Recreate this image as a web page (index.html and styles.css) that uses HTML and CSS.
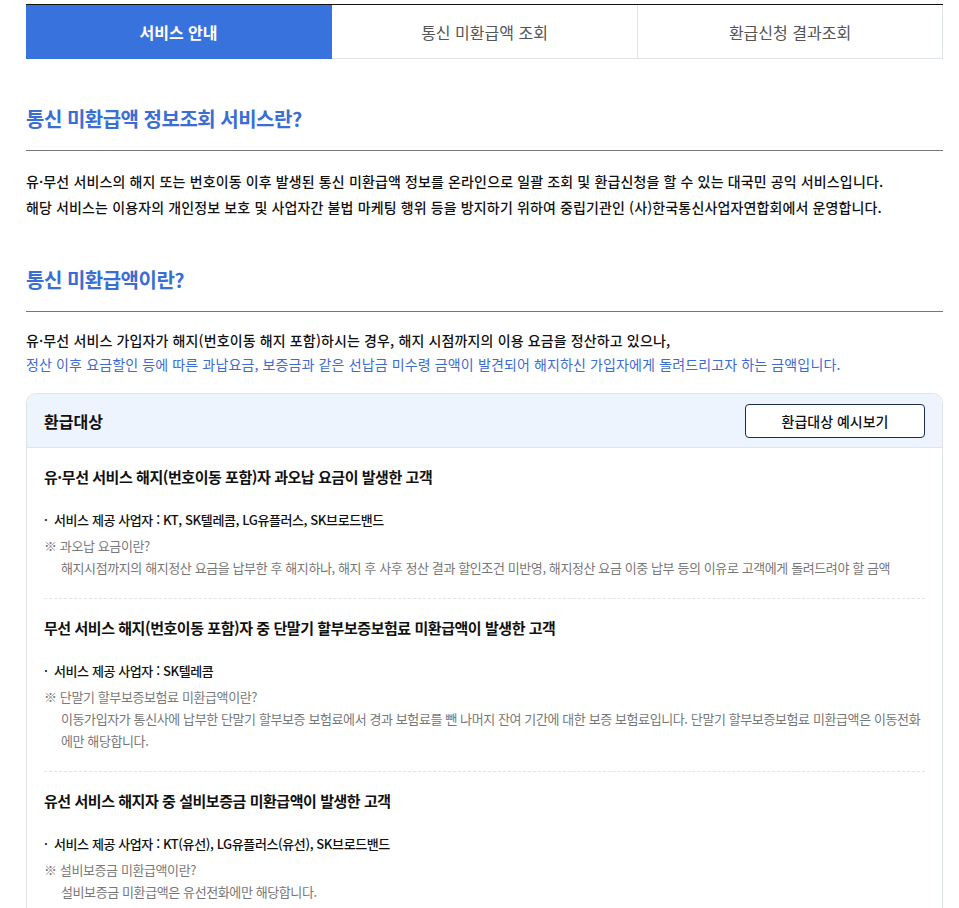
FILE: index.html
```html
<!DOCTYPE html>
<html lang="ko">
<head>
<meta charset="utf-8">
<link rel="stylesheet" href="styles.css">
</head>
<body>
<div class="wrap">
  <nav class="tabs">
    <a class="tab active">서비스 안내</a>
    <a class="tab">통신 미환급액 조회</a>
    <a class="tab">환급신청 결과조회</a>
  </nav>

  <section class="sec first">
    <h2 class="sec-title">통신 미환급액 정보조회 서비스란?</h2>
    <div class="sec-body">
      <p class="txt">유·무선 서비스의 해지 또는 번호이동 이후 발생된 통신 미환급액 정보를 온라인으로 일괄 조회 및 환급신청을 할 수 있는 대국민 공익 서비스입니다.<br>해당 서비스는 이용자의 개인정보 보호 및 사업자간 불법 마케팅 행위 등을 방지하기 위하여 중립기관인 (사)한국통신사업자연합회에서 운영합니다.</p>
    </div>
  </section>

  <section class="sec second">
    <h2 class="sec-title">통신 미환급액이란?</h2>
    <div class="sec-body">
      <p class="txt tight">유·무선 서비스 가입자가 해지(번호이동 해지 포함)하시는 경우, 해지 시점까지의 이용 요금을 정산하고 있으나,<br><span class="blue">정산 이후 요금할인 등에 따른 과납요금, 보증금과 같은 선납금 미수령 금액이 발견되어 해지하신 가입자에게 돌려드리고자 하는 금액입니다.</span></p>
    </div>
  </section>

  <div class="box">
    <div class="box-head">
      <h3 class="box-title">환급대상</h3>
      <button class="btn">환급대상 예시보기</button>
    </div>
    <div class="box-body">
      <div class="item">
        <h4 class="item-title">유·무선 서비스 해지(번호이동 포함)자 과오납 요금이 발생한 고객</h4>
        <p class="bullet">·&nbsp; 서비스 제공 사업자 : KT, SK텔레콤, LG유플러스, SK브로드밴드</p>
        <p class="note">※ 과오납 요금이란?</p>
        <p class="desc">해지시점까지의 해지정산 요금을 납부한 후 해지하나, 해지 후 사후 정산 결과 할인조건 미반영, 해지정산 요금 이중 납부 등의 이유로 고객에게 돌려드려야 할 금액</p>
      </div>
      <div class="item">
        <h4 class="item-title">무선 서비스 해지(번호이동 포함)자 중 단말기 할부보증보험료 미환급액이 발생한 고객</h4>
        <p class="bullet">·&nbsp; 서비스 제공 사업자 : SK텔레콤</p>
        <p class="note">※ 단말기 할부보증보험료 미환급액이란?</p>
        <p class="desc">이동가입자가 통신사에 납부한 단말기 할부보증 보험료에서 경과 보험료를 뺀 나머지 잔여 기간에 대한 보증 보험료입니다. 단말기 할부보증보험료 미환급액은 이동전화<br>에만 해당합니다.</p>
      </div>
      <div class="item">
        <h4 class="item-title">유선 서비스 해지자 중 설비보증금 미환급액이 발생한 고객</h4>
        <p class="bullet">·&nbsp; 서비스 제공 사업자 : KT(유선), LG유플러스(유선), SK브로드밴드</p>
        <p class="note">※ 설비보증금 미환급액이란?</p>
        <p class="desc">설비보증금 미환급액은 유선전화에만 해당합니다.</p>
      </div>
    </div>
  </div>
</div>
</body>
</html>
```

FILE: styles.css
```css
* { box-sizing: border-box; }
body {
  margin: 0;
  background: #fff;
  font-family: "Noto Sans CJK KR", "Noto Sans", sans-serif;
  color: #111;
}
.wrap {
  width: 917px;
  margin: 0 0 0 26px;
  padding-top: 4px;
}
.tabs {
  display: grid;
  grid-template-columns: 306px 306px 305px;
  border-top: 1px solid #111;
}
.tab {
  height: 54px;
  display: flex;
  align-items: center;
  justify-content: center;
  font-size: 16px;
  color: #555;
  border-right: 1px solid #dfe3ea;
  border-bottom: 1px solid #dfe3ea;
}
.tab.active {
  background: #3873dd;
  color: #fff;
  font-weight: 700;
  border-color: #3873dd;
}
.sec-title {
  margin: 0;
  font-size: 20px;
  font-weight: 700;
  letter-spacing: -0.5px;
  color: #3a6ed4;
  line-height: 30px;
  padding-bottom: 16px;
  border-bottom: 1px solid #777;
}
.sec.first { padding-top: 45px; }
.sec.second { padding-top: 45px; }
.sec-body { padding-top: 17px; }
.second .sec-body { padding-top: 16px; }
.txt {
  margin: 0;
  font-size: 14px;
  font-weight: 500;
  letter-spacing: 0.13px;
  line-height: 26px;
}
.txt.tight { line-height: 24px; }
.blue { color: #3d6bd4; font-weight: 400; }
.box {
  margin-top: 17px;
  border: 1px solid #dfe3ea;
  border-radius: 10px 10px 0 0;
  border-bottom: none;
}
.box-head {
  display: flex;
  align-items: center;
  justify-content: space-between;
  height: 54px;
  padding: 0 17px;
  background: #eef4fd;
  border-bottom: 1px solid #dfe3ea;
  border-radius: 10px 10px 0 0;
}
.box-title {
  margin: 0;
  font-size: 16px;
  font-weight: 700;
}
.btn {
  width: 180px;
  height: 34px;
  background: #fff;
  border: 1px solid #1d2c4c;
  border-radius: 4px;
  font-family: inherit;
  font-size: 14px;
  font-weight: 500;
  color: #111;
}
.box-body {
  padding: 0 17px;
}
.item {
  padding: 18px 0 19px;
  border-bottom: 1px dashed #dfe3ea;
}
.item:last-child { border-bottom: none; }
.item-title {
  margin: 0;
  font-size: 15px;
  font-weight: 700;
  letter-spacing: -0.45px;
  line-height: 22px;
}
.bullet {
  margin: 21px 0 0;
  font-size: 13px;
  font-weight: 500;
  letter-spacing: -0.4px;
  line-height: 22px;
}
.note {
  margin: 4px 0 0;
  font-size: 13px;
  color: #7a7a7a;
  letter-spacing: -0.4px;
  line-height: 22px;
}
.desc {
  margin: 0;
  padding-left: 17px;
  font-size: 13px;
  color: #777;
  letter-spacing: -0.4px;
  line-height: 22px;
}
```
